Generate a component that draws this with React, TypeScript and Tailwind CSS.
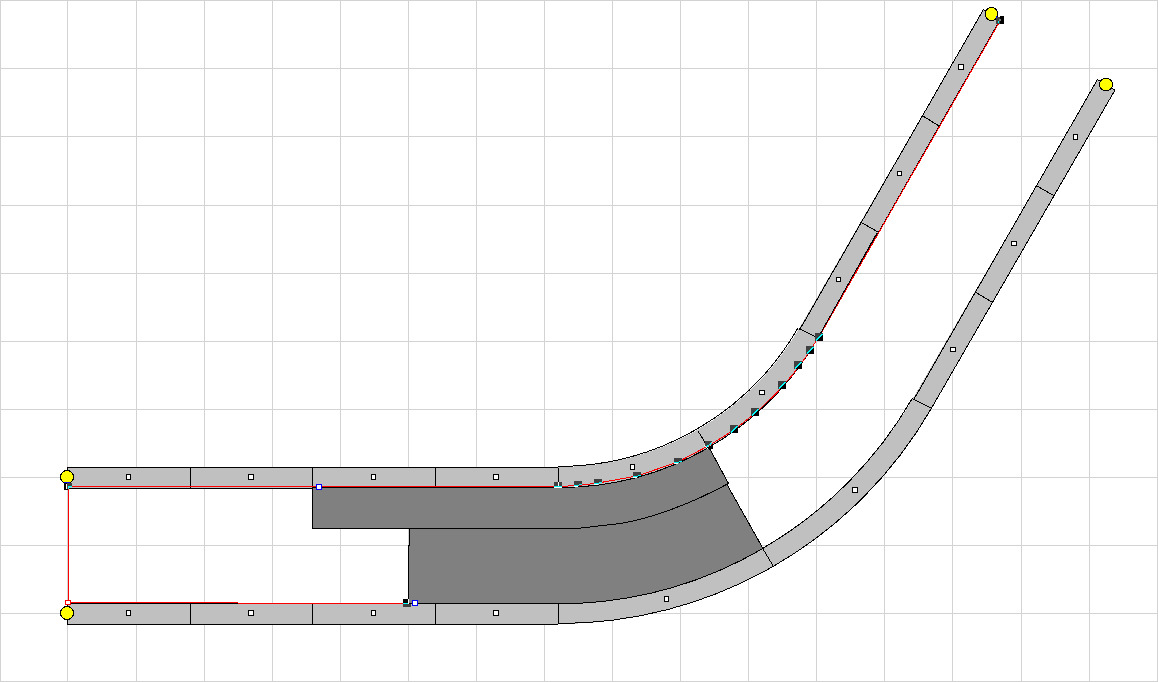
const gridX = [0, 67, 136, 204, 272, 340, 408, 476, 544, 612, 680, 748, 816, 884, 952, 1021, 1089, 1157];
const gridY = [0, 68, 136, 205, 273, 341, 409, 477, 545, 613, 681];

// x, y, width, height of each segment's midpoint handle
const midpoints = [
  [126, 474, 5, 6], [248, 474, 6, 6], [371, 474, 5, 6], [493, 474, 6, 6],
  [126, 610, 5, 6], [248, 610, 6, 6], [371, 610, 5, 6], [493, 610, 6, 6],
  [630, 464, 5, 6], [664, 596, 5, 6], [759, 390, 6, 5], [852, 487, 6, 6],
  [836, 277, 5, 5], [897, 171, 5, 5], [958, 64, 6, 6],
  [950, 347, 6, 5], [1011, 241, 6, 5], [1073, 134, 5, 6],
];

const slopeNodes = [
  [730, 425], [751, 408], [778, 381], [794, 361], [806, 346], [815, 333],
];
const flatNodes = [[574, 481], [594, 479], [633, 472], [674, 458]];
const endpoints = [[67, 477, 7], [67, 613, 7], [991.5, 14, 7], [1106, 84.5, 7]];

const separators = [
  'M190.5 467V488M312.5 467V488M435.5 467V487M558.5 468V487',
  'M190.5 604V624M312.5 603V624M435.5 603V624M558.5 603V623',
  'M698 431L709 449M799 328.5L818 338M860.5 222L878 232M923 116L939 126',
  'M763 549L773.5 566.5M913 399L932 408.5M976 292.5L992 302M1037 186L1054.5 196',
].join('');

function Handle({ box, color }: { box: number[]; color: string }) {
  const [x, y, w, h] = box;
  return <rect x={x + 0.5} y={y + 0.5} width={w - 1} height={h - 1} fill="#fff" stroke={color} />;
}

function Track({ d, edges }: { d: string; edges: string }) {
  return (
    <g>
      <path d={d} fill="#c0c0c0" />
      <path d={edges} fill="none" stroke="#000" />
    </g>
  );
}

export default function App() {
  return (
    <main className="w-full bg-white">
      <svg viewBox="0 0 1158 682" className="block h-auto w-full" shapeRendering="crispEdges" role="img" aria-label="Track plan">
        <g stroke="#d3d3d3">
          {gridX.map((x) => <line key={x} x1={x + 0.5} x2={x + 0.5} y1={0} y2={682} />)}
          {gridY.map((y) => <line key={y} x1={0} x2={1158} y1={y + 0.5} y2={y + 0.5} />)}
        </g>

        <Track
          d="M67 467H558A277.5 277.5 0 0 0 798.5 329.5L983 10L1000 20L817.5 338A298.5 298.5 0 0 1 558 488H67Z"
          edges="M67.5 488.5V467.5H558M558 466.5A277.5 277.5 0 0 0 798 328M799.5 330L983.5 9.5L1000 20L818 338A298.5 298.5 0 0 1 558 487.5H312M312 488.5H67"
        />
        <Track
          d="M67 603H558A409.5 409.5 0 0 0 912.5 399L1097.5 80L1115 90L931 408.5A429.5 429.5 0 0 1 558 624H67Z"
          edges="M67.5 624.5V603.5H558A409.5 409.5 0 0 0 912.5 398M913.5 400L1097.5 79.5L1115 90L931 409A429.5 429.5 0 0 1 558 623.5M558 624.5H67"
        />

        <g fill="#808080" stroke="#000">
          <path d="M312.5 487.5H558A298.5 298.5 0 0 0 709 447.5L728.5 483.5C690 504 650 519 620 523.5L577 528.5H312.5Z" />
          <path d="M409.5 528.5H577L620 523.5C650 519 690 504 727 484.5L763 548.5A409.5 409.5 0 0 1 577 603.5H408.5V545H409.5Z" />
        </g>
        <path d={separators} fill="none" stroke="#000" />

        <g fill="none" stroke="#f00">
          <path d="M68.5 488V600M71 602.5H238M238 603.5H405M71 486.5H558" />
          <path d="M558 486.5L578 485.5L598 483L637 476L678 462L709 445.5A298.5 298.5 0 0 0 818 338L819 337L1000 21" />
        </g>
        <path d="M819 336L877 233" fill="none" stroke="#000" />

        {endpoints.map(([cx, cy, r]) => (
          <circle key={`${cx}-${cy}`} cx={cx} cy={cy} r={r - 0.5} fill="#ff0" stroke="#000" />
        ))}
        {midpoints.map((box) => <Handle key={box.join('-')} box={box} color="#000" />)}

        {slopeNodes.map(([x, y]) => (
          <g key={x} transform={`translate(${x} ${y})`}>
            <path d="M0 0H8L0 8Z" fill="#404040" />
            <path d="M8 0V8H0Z" fill="#000" />
            <path d="M1 7.5L7.5 1" stroke="#0ff" />
          </g>
        ))}
        {flatNodes.map(([x, y]) => (
          <g key={x} transform={`translate(${x} ${y})`}>
            <path d="M0 0H8V4H0Z" fill="#404040" />
            <path d="M0 5L8 3.5" stroke="#0ff" />
            <path d="M0 6L4 5.5" stroke="#fff" />
          </g>
        ))}

        <path d="M554 482H558V486H554ZM559 482H562V486H559Z" fill="#404040" />
        <path d="M558 482H559V486H558ZM554 487H562V488H554Z" fill="#fff" />
        <path d="M554 486.5H562" stroke="#0ff" />

        <path d="M705 441H713L707 446H705Z" fill="#404040" />
        <path d="M713 443V449H709Z" fill="#000" />
        <path d="M706 447L712 443" stroke="#0ff" />
        <path d="M704 445L708 449" stroke="#fff" />

        <path d="M64 484H66V489H68V490H64Z" fill="#000" />
        <path d="M67 483H72V486H69V489H67Z" fill="#404040" />
        <path d="M66 484H67V489H66ZM69 489H72V490H69Z" fill="#fff" />
        <path d="M68.5 489V486.5H72" fill="none" stroke="#0ff" />
        <path d="M64 482.5H70" stroke="#00f" />

        <path d="M996 17H1000V24H996Z" fill="#404040" />
        <path d="M1000 16H1004V24H1000Z" fill="#000" />
        <path d="M999 19H1001V21H999Z" fill="#808080" />
        <path d="M998.5 23V21" fill="none" stroke="#0ff" />
        <path d="M996.5 16V18" fill="none" stroke="#00f" />

        <path d="M403 599H408V603H403Z" fill="#000" />
        <path d="M403 604H411V607H403Z" fill="#404040" />
        <path d="M408 599H409V604H408Z" fill="#fff" />
        <path d="M403 603.5H408" stroke="#0ff" />

        <Handle box={[316, 484, 6, 6]} color="#00f" />
        <Handle box={[412, 600, 6, 6]} color="#00f" />
        <Handle box={[65, 600, 6, 5]} color="#f00" />
      </svg>
    </main>
  );
}
